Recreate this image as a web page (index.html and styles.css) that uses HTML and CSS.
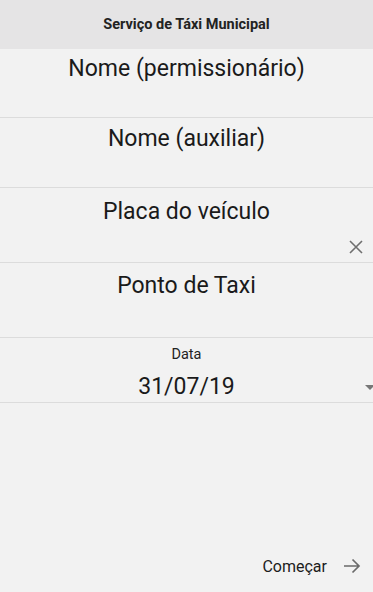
FILE: index.html
```html
<!DOCTYPE html>
<html lang="pt">
<head>
<meta charset="utf-8">
<link rel="stylesheet" href="styles.css">
</head>
<body>
<div class="app">
  <header class="topbar">Serviço de Táxi Municipal</header>
  <main class="form">
    <div class="field f1"><span class="label">Nome (permissionário)</span></div>
    <div class="field f2"><span class="label">Nome (auxiliar)</span></div>
    <div class="field f3"><span class="label">Placa do veículo</span>
      <svg class="clear" width="14" height="14" viewBox="0 0 14 14"><path d="M1 1L13 13M13 1L1 13" stroke="#6f6f6f" stroke-width="1.6" fill="none"/></svg>
    </div>
    <div class="field f4"><span class="label">Ponto de Taxi</span></div>
    <div class="date">
      <span class="date-label">Data</span>
      <span class="date-value">31/07/19</span>
      <span class="caret"></span>
    </div>
  </main>
  <footer class="actions">
    <span class="start">Começar</span>
    <svg class="arrow" width="18" height="16" viewBox="0 0 18 16"><path d="M1 8H16M9.5 1.5L16 8L9.5 14.5" stroke="#6a6a6a" stroke-width="1.7" fill="none"/></svg>
  </footer>
</div>
</body>
</html>
```
FILE: styles.css
```css
html, body { margin: 0; padding: 0; }
body {
  background: #f2f2f2;
  font-family: Roboto, "Liberation Sans", sans-serif;
  color: #1c1c1c;
}
.app {
  width: 373px;
  height: 592px;
  display: flex;
  flex-direction: column;
  overflow: hidden;
}
.topbar {
  height: 49px;
  background: #e5e4e5;
  display: flex;
  align-items: center;
  justify-content: center;
  font-size: 14.5px;
  font-weight: bold;
  color: #222;
}
.form { display: flex; flex-direction: column; }
.field {
  position: relative;
  box-sizing: border-box;
  border-bottom: 1px solid #dcdcdc;
  display: flex;
  justify-content: center;
  font-size: 23px;
  line-height: 27px;
  color: #1a1a1a;
}
.f1 { height: 69px; padding-top: 6px; }
.f2 { height: 70px; padding-top: 7px; }
.f3 { height: 75px; padding-top: 10px; }
.f4 { height: 75px; padding-top: 9px; }
.clear { position: absolute; right: 10px; top: 52px; }
.date {
  position: relative;
  height: 65px;
  box-sizing: border-box;
  border-bottom: 1px solid #dcdcdc;
  display: flex;
  flex-direction: column;
  align-items: center;
  padding-top: 8px;
}
.date-label { font-size: 14.5px; color: #222; line-height: 17px; }
.date-value { font-size: 23px; color: #1a1a1a; margin-top: 10px; line-height: 27px; }
.caret {
  position: absolute;
  right: -2px;
  top: 47px;
  width: 0; height: 0;
  border-left: 5px solid transparent;
  border-right: 5px solid transparent;
  border-top: 5px solid #777;
}
.actions {
  margin-top: auto;
  height: 50px;
  display: flex;
  align-items: center;
  justify-content: flex-end;
  gap: 16px;
  padding-right: 12px;
  padding-bottom: 1px;
}
.start { font-size: 16px; color: #1c1c1c; }
.arrow { display: block; }
```
